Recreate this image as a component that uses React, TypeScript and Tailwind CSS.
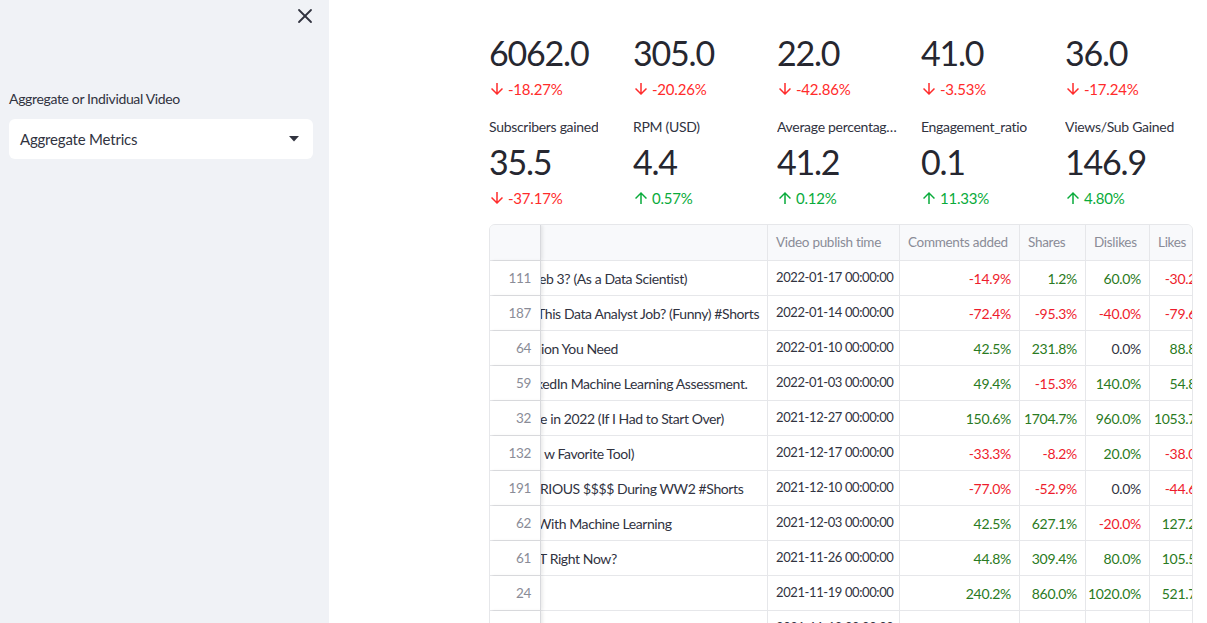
import React from "react";
import { X } from "lucide-react";

const FONT = { fontFamily: "Lato, 'Noto Sans', sans-serif" };

type Delta = { v: string; up: boolean };
type Metric = { label?: string; value: string; delta: Delta };

const row1: Metric[] = [
  { value: "6062.0", delta: { v: "-18.27%", up: false } },
  { value: "305.0", delta: { v: "-20.26%", up: false } },
  { value: "22.0", delta: { v: "-42.86%", up: false } },
  { value: "41.0", delta: { v: "-3.53%", up: false } },
  { value: "36.0", delta: { v: "-17.24%", up: false } },
];
const row2: Metric[] = [
  { label: "Subscribers gained", value: "35.5", delta: { v: "-37.17%", up: false } },
  { label: "RPM (USD)", value: "4.4", delta: { v: "0.57%", up: true } },
  { label: "Average percentage viewed (%)", value: "41.2", delta: { v: "0.12%", up: true } },
  { label: "Engagement_ratio", value: "0.1", delta: { v: "11.33%", up: true } },
  { label: "Views/Sub Gained", value: "146.9", delta: { v: "4.80%", up: true } },
];

type Row = {
  idx: string;
  title: string;
  off: string;
  date: string;
  vals: string[];
};

const rows: Row[] = [
  { idx: "111", title: "eb 3? (As a Data Scientist)", off: "-ml-[2px]", date: "2022-01-17 00:00:00", vals: ["-14.9%", "1.2%", "60.0%", "-30.2%"] },
  { idx: "187", title: "This Data Analyst Job? (Funny) #Shorts", off: "-ml-[4px]", date: "2022-01-14 00:00:00", vals: ["-72.4%", "-95.3%", "-40.0%", "-79.6%"] },
  { idx: "64", title: "ion You Need", off: "ml-[0px]", date: "2022-01-10 00:00:00", vals: ["42.5%", "231.8%", "0.0%", "88.8%"] },
  { idx: "59", title: "kedIn Machine Learning Assessment.", off: "-ml-[5px]", date: "2022-01-03 00:00:00", vals: ["49.4%", "-15.3%", "140.0%", "54.8%"] },
  { idx: "32", title: "e in 2022 (If I Had to Start Over)", off: "-ml-[1px]", date: "2021-12-27 00:00:00", vals: ["150.6%", "1704.7%", "960.0%", "1053.7%"] },
  { idx: "132", title: "w Favorite Tool)", off: "ml-[3px]", date: "2021-12-17 00:00:00", vals: ["-33.3%", "-8.2%", "20.0%", "-38.0%"] },
  { idx: "191", title: "RIOUS $$$$ During WW2 #Shorts", off: "-ml-[1px]", date: "2021-12-10 00:00:00", vals: ["-77.0%", "-52.9%", "0.0%", "-44.6%"] },
  { idx: "62", title: "With Machine Learning", off: "-ml-[4px]", date: "2021-12-03 00:00:00", vals: ["42.5%", "627.1%", "-20.0%", "127.2%"] },
  { idx: "61", title: "T Right Now?", off: "-ml-[2px]", date: "2021-11-26 00:00:00", vals: ["44.8%", "309.4%", "80.0%", "105.5%"] },
  { idx: "24", title: "", off: "", date: "2021-11-19 00:00:00", vals: ["240.2%", "860.0%", "1020.0%", "521.7%"] },
  { idx: "150", title: "ould you Learn Python or R for Data Science", off: "-ml-[4px]", date: "2021-11-12 00:00:00", vals: ["12.1%", "44.0%", "-60.0%", "20.4%"] },
];

function valColor(v: string) {
  if (v.startsWith("-")) return "text-[#ee1c2c]";
  if (v === "0.0%") return "text-[#31333f]";
  return "text-[#2a7a22]";
}

function Arrow({ up }: { up: boolean }) {
  return (
    <svg width="18" height="18" viewBox="0 0 24 24" fill="currentColor" className={up ? "" : "rotate-180"}>
      <path d="M4 12l1.41 1.41L11 7.83V20h2V7.83l5.58 5.59L20 12l-8-8-8 8z" />
    </svg>
  );
}

function DeltaView({ d }: { d: Delta }) {
  return (
    <div className={`h-[26px] flex items-center gap-[2px] text-[15px] tracking-[-0.2px] -ml-[1px] ${d.up ? "text-[#09ab3b]" : "text-[#ff2b2b]"}`}>
      <Arrow up={d.up} />
      <span>{d.v}</span>
    </div>
  );
}

const cellB = "border-r border-[#e6e7ea]";

export default function App() {
  return (
    <div className="flex h-[623px] w-[1207px] overflow-hidden bg-white text-[#31333f]" style={FONT}>
      <aside className="w-[329px] shrink-0 bg-[#f0f2f6] flex flex-col">
        <div className="h-[30px] flex items-center justify-end pr-[12px] pt-[1px]">
          <X size={24} strokeWidth={1.8} className="text-[#31333f]" />
        </div>
        <div className="pl-[9px] pr-[16px] mt-[57px]">
          <div className="text-[14px] leading-[24px] tracking-[-0.35px] text-[#31333f]">Aggregate or Individual Video</div>
          <div className="mt-[8px] h-[40px] w-[304px] rounded-[6px] bg-white flex items-center justify-between pl-[11px] pr-[14px]">
            <span className="text-[15px] tracking-[-0.2px] text-[#31333f]">Aggregate Metrics</span>
            <svg width="10" height="6" viewBox="0 0 10 6">
              <path d="M0 0h10L5 5.5z" fill="#31333f" />
            </svg>
          </div>
        </div>
      </aside>

      <main className="flex-1 pl-[160px] pt-[30px]">
        <div className="w-[704px]">
          <div className="grid grid-cols-[128px_128px_128px_128px_128px] gap-x-[16px]">
            {row1.map((m, i) => (
              <div key={i} className="flex flex-col">
                <div className="h-[46px] flex items-center text-[34px] tracking-[-1.2px] text-[#262730] leading-none">{m.value}</div>
                <DeltaView d={m.delta} />
              </div>
            ))}
          </div>
          <div className="grid grid-cols-[128px_128px_128px_128px_128px] gap-x-[16px] mt-[12px]">
            {row2.map((m, i) => (
              <div key={i} className="flex flex-col min-w-0">
                <div className="h-[25px] flex items-center text-[14px] tracking-[-0.3px] text-[#31333f] min-w-0 pr-[2px]">
                  <span className="truncate">{m.label}</span>
                </div>
                <div className="h-[46px] flex items-center text-[34px] tracking-[-1.2px] text-[#262730] leading-none">{m.value}</div>
                <DeltaView d={m.delta} />
              </div>
            ))}
          </div>

          <div className="mt-[13px] w-[704px] overflow-hidden rounded-t-[6px] border border-[#e6e7ea] text-[14px] tracking-[-0.3px]">
            <div className="w-[800px]">
              <div className="flex h-[36px] bg-[#f8f9fb] text-[#8a8c97] border-b border-[#e6e7ea] whitespace-nowrap text-[13.5px]">
                <div className="w-[51px] shrink-0 border-r border-[#d8d9dd] shadow-[2px_0_3px_rgba(0,0,0,0.08)] relative z-10 bg-[#f8f9fb]" />
                <div className={`w-[227px] shrink-0 ${cellB}`} />
                <div className={`w-[132px] shrink-0 ${cellB} flex items-center px-[8px]`}>Video publish time</div>
                <div className={`w-[120px] shrink-0 ${cellB} flex items-center px-[8px]`}>Comments added</div>
                <div className={`w-[66px] shrink-0 ${cellB} flex items-center px-[8px]`}>Shares</div>
                <div className={`w-[64px] shrink-0 ${cellB} flex items-center px-[8px]`}>Dislikes</div>
                <div className={`w-[66px] shrink-0 ${cellB} flex items-center px-[8px]`}>Likes</div>
              </div>
              {rows.map((r, i) => (
                <div key={i} className="flex h-[35px] border-b border-[#e6e7ea] whitespace-nowrap">
                  <div className="w-[51px] shrink-0 border-r border-[#d8d9dd] shadow-[2px_0_3px_rgba(0,0,0,0.08)] relative z-10 bg-white flex items-center justify-end pr-[9px] text-[#8a8c97] text-[13.5px]">
                    {r.idx}
                  </div>
                  <div className={`w-[227px] shrink-0 ${cellB} overflow-hidden flex items-center tracking-[-0.4px]`}>
                    <span className={r.off}>{r.title}</span>
                  </div>
                  <div className={`w-[132px] shrink-0 ${cellB} flex items-center px-[8px] text-[13px] tracking-[-0.4px]`}>{r.date}</div>
                  {r.vals.map((v, j) => (
                    <div
                      key={j}
                      className={`${j === 0 ? "w-[120px]" : j === 2 ? "w-[64px]" : "w-[66px]"} shrink-0 ${cellB} flex items-center justify-end px-[8px] ${valColor(v)}`}
                    >
                      {v}
                    </div>
                  ))}
                </div>
              ))}
            </div>
          </div>
        </div>
      </main>
    </div>
  );
}
